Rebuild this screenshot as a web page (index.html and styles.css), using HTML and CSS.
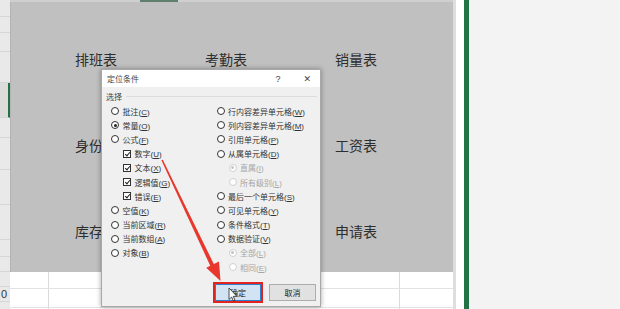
FILE: index.html
```html
<!DOCTYPE html>
<html lang="zh-CN">
<head>
    <meta charset="UTF-8">
    <title>定位条件</title>
    <link rel="stylesheet" href="styles.css">
</head>
<body>

<div class="app">
    <div class="rowhead">
        <div class="rh" style="height:17px"></div>
        <div class="rh" style="height:16px"></div>
        <div class="rh" style="height:19px"></div>
        <div class="rh" style="height:31px"></div>
        <div class="rh active" style="height:35px"></div>
        <div class="rh" style="height:20px"></div>
        <div class="rh" style="height:32px"></div>
        <div class="rh" style="height:35px"></div>
        <div class="rh" style="height:35px"></div>
        <div class="rh" style="height:17px"></div>
        <div class="rh" style="height:15px"></div>
        <div class="rh" style="height:15px"></div>
        <div class="rh num" style="height:15px">0</div>
    </div>

    <div class="sheet">
        <div class="topstrip"><span class="colsel"></span></div>
        <div class="sel">
            <span class="cell">排班表</span>
            <span class="cell">考勤表</span>
            <span class="cell">销量表</span>
            <span class="cell">身份</span>
            <span class="cell"></span>
            <span class="cell">工资表</span>
            <span class="cell">库存</span>
            <span class="cell"></span>
            <span class="cell">申请表</span>
        </div>
        <div class="rows">
            <div class="row"></div>
            <div class="row"></div>
            <div class="row"></div>
        </div>
    </div>

    <div class="edge"></div>
    <div class="green"></div>
    <div class="panel"></div>

    <div class="dialog">
        <div class="title">
            <span>定位条件</span>
            <span class="help">?</span>
            <span class="close">✕</span>
        </div>
        <div class="group">选择</div>
        <div class="options">
            <div class="col left">
                <div class="opt"><i class="radio"></i><span>批注(<u>C</u>)</span></div>
                <div class="opt"><i class="radio on"></i><span>常量(<u>O</u>)</span></div>
                <div class="opt"><i class="radio"></i><span>公式(<u>F</u>)</span></div>
                <div class="opt sub"><i class="check"></i><span>数字(<u>U</u>)</span></div>
                <div class="opt sub"><i class="check"></i><span>文本(<u>X</u>)</span></div>
                <div class="opt sub"><i class="check"></i><span>逻辑值(<u>G</u>)</span></div>
                <div class="opt sub"><i class="check"></i><span>错误(<u>E</u>)</span></div>
                <div class="opt"><i class="radio"></i><span>空值(<u>K</u>)</span></div>
                <div class="opt"><i class="radio"></i><span>当前区域(<u>R</u>)</span></div>
                <div class="opt"><i class="radio"></i><span>当前数组(<u>A</u>)</span></div>
                <div class="opt"><i class="radio"></i><span>对象(<u>B</u>)</span></div>
            </div>
            <div class="col right">
                <div class="opt"><i class="radio"></i><span>行内容差异单元格(<u>W</u>)</span></div>
                <div class="opt"><i class="radio"></i><span>列内容差异单元格(<u>M</u>)</span></div>
                <div class="opt"><i class="radio"></i><span>引用单元格(<u>P</u>)</span></div>
                <div class="opt"><i class="radio"></i><span>从属单元格(<u>D</u>)</span></div>
                <div class="opt sub off"><i class="radio on"></i><span>直属(<u>I</u>)</span></div>
                <div class="opt sub off"><i class="radio"></i><span>所有级别(<u>L</u>)</span></div>
                <div class="opt"><i class="radio"></i><span>最后一个单元格(<u>S</u>)</span></div>
                <div class="opt"><i class="radio"></i><span>可见单元格(<u>Y</u>)</span></div>
                <div class="opt"><i class="radio"></i><span>条件格式(<u>T</u>)</span></div>
                <div class="opt"><i class="radio"></i><span>数据验证(<u>V</u>)</span></div>
                <div class="opt sub off"><i class="radio on"></i><span>全部(<u>L</u>)</span></div>
                <div class="opt sub off"><i class="radio"></i><span>相同(<u>E</u>)</span></div>
            </div>
        </div>
        <div class="actions">
            <button class="btn ok">确定</button>
            <button class="btn">取消</button>
        </div>
    </div>

    <svg class="marks" width="620" height="309" viewBox="0 0 620 309">
        <polygon points="161.4,160.3 162.8,159.7 214.4,265.2 210.8,266.9" fill="#e8372c"/>
        <polygon points="220.5,281 206.2,267.8 219,261.6" fill="#e8372c"/>
        <path d="M229 288 L229 299.5 L231.6 297 L233.4 301 L235 300.3 L233.3 296.4 L236.8 296.2 Z" fill="#fff" stroke="#222" stroke-width="0.8" stroke-linejoin="round"/>
    </svg>
</div>

</body>
</html>
```

FILE: styles.css
```css
body {
    margin: 0;
    font-family: "Noto Sans CJK SC", "Noto Sans", sans-serif;
    background: #f3f3f3;
}
.app {
    position: relative;
    display: flex;
    width: 620px;
    height: 309px;
    overflow: hidden;
}
.rowhead {
    width: 10px;
    flex: none;
    background: #e9e9e9;
}
.rh {
    box-sizing: border-box;
    border-bottom: 1px solid #d6d6d6;
}
.rh.active {
    background: #dcdcdc;
    border-right: 2px solid #217346;
}
.rh.num {
    font-family: "Liberation Sans", sans-serif;
    font-size: 11px;
    line-height: 15px;
    color: #333;
    padding-left: 1px;
}
.sheet {
    width: 443px;
    flex: none;
    background: #fff;
    overflow: hidden;
}
.topstrip {
    height: 2px;
    background: #cfcfcf;
    padding-left: 130px;
}
.colsel {
    display: block;
    width: 38px;
    height: 2px;
    background: #5f7f6c;
}
.sel {
    display: grid;
    grid-template-columns: repeat(3, 130px);
    grid-auto-rows: 86px;
    height: 270px;
    box-sizing: border-box;
    padding: 47px 0 0 64px;
    background: #c0c0c0;
    border-left: 1px solid #b4b4b4;
    overflow: hidden;
}
.cell {
    font-size: 14px;
    line-height: 20px;
    color: #2e2e2e;
    white-space: nowrap;
}
.row {
    height: 16px;
    border-bottom: 1px solid #e2e2e2;
    background:
        linear-gradient(#dadada, #dadada) 38px 0 / 1px 100% no-repeat,
        linear-gradient(#dadada, #dadada) 389px 0 / 1px 100% no-repeat,
        #fff;
}
.row:nth-child(2) {
    height: 18px;
}
.edge {
    width: 11px;
    flex: none;
    background: #fff;
    border-left: 3px solid #dedede;
    box-sizing: border-box;
}
.green {
    width: 5px;
    flex: none;
    background: #217346;
}
.panel {
    flex: 1;
    background: #f3f3f3;
}

.dialog {
    position: absolute;
    left: 101px;
    top: 69px;
    width: 220px;
    height: 238px;
    box-sizing: border-box;
    display: flex;
    flex-direction: column;
    background: #f0f0f0;
    border: 1px solid #a8a8a8;
    box-shadow: 0 0 5px rgba(0, 0, 0, 0.35);
    font-family: "Liberation Sans", "Noto Sans CJK SC", sans-serif;
    font-size: 8px;
    color: #333;
}
.title {
    height: 17px;
    display: flex;
    align-items: center;
    padding-left: 5px;
    background: #fff;
    color: #444;
}
.help {
    margin-left: auto;
    font-size: 9px;
}
.close {
    margin: 0 9px 0 23px;
    font-family: "DejaVu Sans", sans-serif;
    font-size: 9px;
}
.group {
    display: flex;
    align-items: center;
    gap: 4px;
    height: 10px;
    margin: 4px 3px 3px 4px;
    color: #444;
}
.group::after {
    content: "";
    flex: 1;
    border-top: 1px solid #dcdcdc;
}
.options {
    display: flex;
    padding-left: 9px;
}
.col.left {
    width: 105.5px;
}
.opt {
    height: 14.2px;
    display: flex;
    align-items: center;
    gap: 3.5px;
    white-space: nowrap;
}
.opt u {
    text-decoration: underline;
    text-underline-offset: 1px;
}
.opt.sub {
    padding-left: 12px;
}
.opt.off {
    color: #a6a6a6;
}
.radio, .check {
    width: 8px;
    height: 8px;
    flex: none;
    box-sizing: border-box;
    border: 1px solid #333;
    background: #fff;
    position: relative;
}
.radio {
    border-radius: 50%;
}
.radio.on::after {
    content: "";
    position: absolute;
    left: 1.5px;
    top: 1.5px;
    width: 3px;
    height: 3px;
    border-radius: 50%;
    background: #222;
}
.off .radio {
    border-color: #d0d0d0;
}
.off .radio.on::after {
    background: #c4c4c4;
}
.check::after {
    content: "";
    position: absolute;
    left: 2px;
    top: 0;
    width: 2px;
    height: 4px;
    border: solid #222;
    border-width: 0 1px 1px 0;
    transform: rotate(40deg);
}
.actions {
    margin-top: auto;
    display: flex;
    justify-content: flex-end;
    gap: 8px;
    padding: 0 4px 5px 0;
}
.btn {
    width: 47px;
    height: 17px;
    padding: 0;
    font-family: inherit;
    font-size: 8px;
    color: #222;
    background: #e1e1e1;
    border: 1px solid #adadad;
}
.btn.ok {
    width: 46px;
    background: #d2e4f4;
    border-color: #2a7fd0;
    outline: 2px solid #e3241c;
    outline-offset: 0;
}
.marks {
    position: absolute;
    left: 0;
    top: 0;
    pointer-events: none;
}
```
